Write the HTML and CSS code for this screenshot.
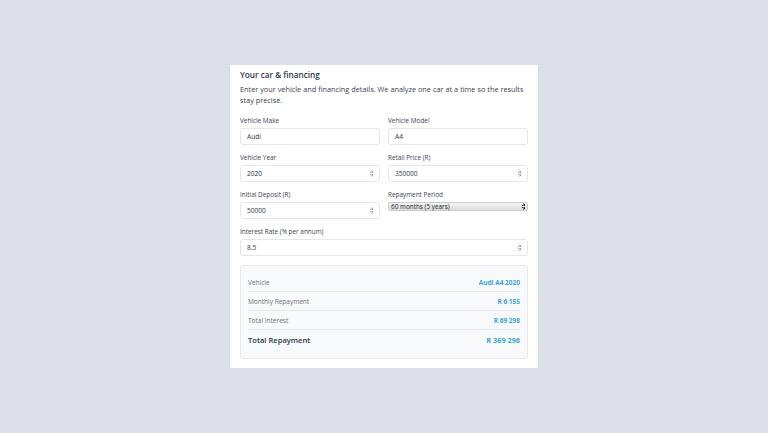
FILE: index.html
```html
<!DOCTYPE html>
<html lang="en">
<head>
    <meta charset="UTF-8">
    <meta name="viewport" content="width=device-width, initial-scale=1.0">
    <title>Your car &amp; financing</title>
    <link rel="stylesheet" href="styles.css">
</head>
<body>

    <div class="card">
        <h2>Your car &amp; financing</h2>
        <p class="intro">Enter your vehicle and financing details. We analyze one car at a time so the results stay precise.</p>

        <div class="form-grid">
            <div class="field">
                <label>Vehicle Make</label>
                <div class="input">Audi</div>
            </div>
            <div class="field">
                <label>Vehicle Model</label>
                <div class="input">A4</div>
            </div>
            <div class="field">
                <label>Vehicle Year</label>
                <div class="input">2020 <span class="spin"></span></div>
            </div>
            <div class="field">
                <label>Retail Price (R)</label>
                <div class="input">350000 <span class="spin"></span></div>
            </div>
            <div class="field">
                <label>Initial Deposit (R)</label>
                <div class="input">50000 <span class="spin"></span></div>
            </div>
            <div class="field">
                <label>Repayment Period</label>
                <div class="select">60 months (5 years) <span class="spin dark"></span></div>
            </div>
            <div class="field wide">
                <label>Interest Rate (% per annum)</label>
                <div class="input">8.5 <span class="spin"></span></div>
            </div>
        </div>

        <div class="results">
            <div class="row"><span>Vehicle</span><strong>Audi A4 2020</strong></div>
            <div class="row"><span>Monthly Repayment</span><strong>R 6 155</strong></div>
            <div class="row"><span>Total Interest</span><strong>R 69 298</strong></div>
            <div class="row total"><span>Total Repayment</span><strong>R 369 298</strong></div>
        </div>
    </div>

</body>
</html>
```

FILE: styles.css
```css
body {
    font-family: "Open Sans", "Liberation Sans", sans-serif;
    background-color: #dcdfe5;
    color: #2d3748;
    margin: 0;
    padding: 0;
}

.card {
    width: 288px;
    margin: 65px auto 0;
    padding: 2px 10px 9px;
    background-color: #fff;
    box-shadow: 0 1px 2px rgba(0, 0, 0, 0.04);
}

.card h2 {
    font-size: 8.2px;
    font-weight: 600;
    margin: 0;
    line-height: 16px;
    color: #2d3748;
}

.intro {
    font-size: 7.3px;
    word-spacing: 0.1px;
    line-height: 11px;
    margin: 1px -8px 10px 0;
    color: #3a4252;
}

.form-grid {
    display: grid;
    grid-template-columns: 1fr 1fr;
    column-gap: 8px;
    row-gap: 8px;
}

.field label {
    display: block;
    font-size: 6.4px;
    line-height: 10px;
    color: #3a4252;
    margin-bottom: 2px;
}

.field.wide {
    grid-column: span 2;
}

.input {
    height: 15px;
    border: 1px solid #e3e6eb;
    border-radius: 3px;
    padding: 0 6px;
    font-size: 6.6px;
    display: flex;
    align-items: center;
    justify-content: space-between;
    color: #2d3748;
}

.select {
    height: 7px;
    border: 1px solid #c9ccd1;
    border-radius: 2px;
    padding: 0 2px;
    font-size: 6.4px;
    line-height: 7px;
    display: flex;
    align-items: center;
    justify-content: space-between;
    background: linear-gradient(#f4f4f4, #dcdcdc);
    color: #222;
}

.spin {
    width: 3px;
    height: 7px;
    background:
        linear-gradient(to bottom right, transparent 50%, #9aa0a8 50%) left top / 1.5px 3px no-repeat,
        linear-gradient(to bottom left, transparent 50%, #9aa0a8 50%) right top / 1.5px 3px no-repeat,
        linear-gradient(to top right, transparent 50%, #9aa0a8 50%) left bottom / 1.5px 3px no-repeat,
        linear-gradient(to top left, transparent 50%, #9aa0a8 50%) right bottom / 1.5px 3px no-repeat;
}

.spin.dark {
    background:
        linear-gradient(to bottom right, transparent 50%, #222 50%) left top / 1.5px 3px no-repeat,
        linear-gradient(to bottom left, transparent 50%, #222 50%) right top / 1.5px 3px no-repeat,
        linear-gradient(to top right, transparent 50%, #222 50%) left bottom / 1.5px 3px no-repeat,
        linear-gradient(to top left, transparent 50%, #222 50%) right bottom / 1.5px 3px no-repeat;
}

.results {
    margin-top: 9px;
    background-color: #f7f9fb;
    border: 1px solid #e6e9ee;
    border-radius: 3px;
    padding: 7px 7px 8px;
}

.row {
    display: flex;
    justify-content: space-between;
    align-items: center;
    height: 18px;
    border-bottom: 1px solid #e8ebef;
    font-size: 6.5px;
    color: #6b7280;
}

.row strong {
    color: #3ba4d6;
    font-weight: 700;
}

.row.total {
    border-bottom: none;
    height: 20px;
    font-size: 7.6px;
    color: #2d3748;
    font-weight: 600;
}

.row.total strong {
    font-size: 7.3px;
}
```
